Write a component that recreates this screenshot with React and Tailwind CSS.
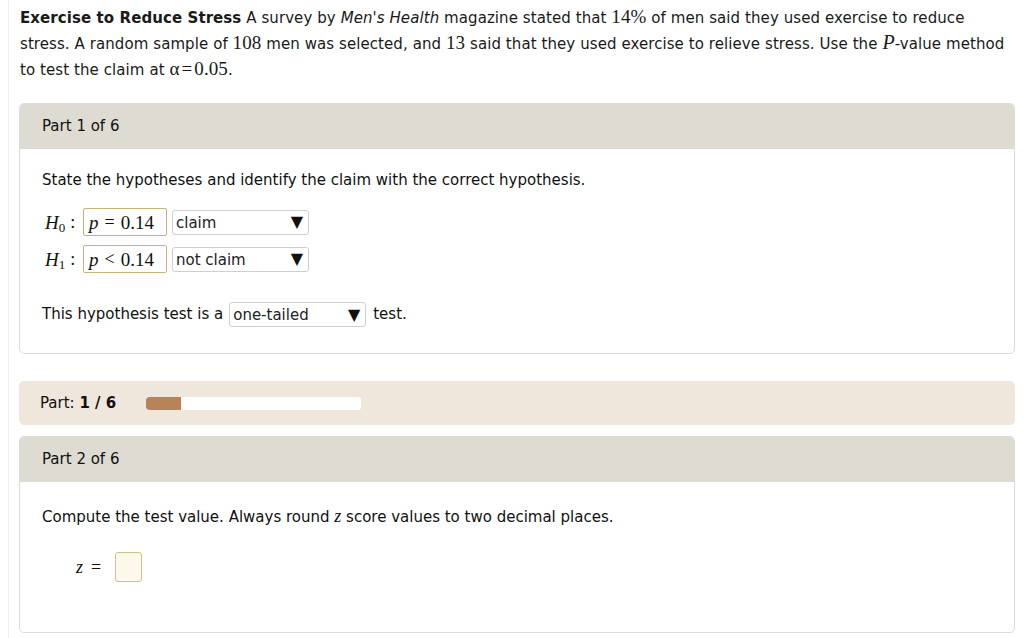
import React from "react";

const sans = { fontFamily: '"DejaVu Sans", Verdana, sans-serif' };
const serif = { fontFamily: '"Liberation Serif", "Times New Roman", serif' };

function M({ children, className = "" }) {
  return (
    <span className={"text-[18px] leading-none " + className} style={serif}>
      {children}
    </span>
  );
}

function Select({ value, w }) {
  return (
    <div
      className={`flex items-center justify-between h-[25px] border border-[#cfcfcf] rounded-[3px] bg-white pl-[3px] pr-[5px] ${w}`}
    >
      <span className="text-[15px] text-[#222] relative top-[1px]">{value}</span>
      <span className="text-[16px] text-[#111] leading-none">▼</span>
    </div>
  );
}

function HypRow({ sub, rel, tag }) {
  return (
    <div className="flex items-center h-[28px]">
      <span className="w-[41px] flex items-center text-[#111] pl-[3px]">
        <M className="italic text-[19px]">H</M>
        <span className="text-[13px] relative top-[5px] leading-none" style={serif}>{sub}</span>
        <M className="ml-[5px]">:</M>
      </span>
      <div className="h-[28px] w-[84px] border border-[#c8b27c] rounded-[2px] flex items-center pl-[5px] bg-white">
        <M className="italic text-[19px]">p</M>
        <M className="mx-[6px]">{rel}</M>
        <M className="text-[19px]">0.14</M>
      </div>
      <div className="ml-[5px]">
        <Select value={tag} w="w-[137px]" />
      </div>
    </div>
  );
}

export default function App() {
  return (
    <div className="w-[1024px] h-[638px] bg-white overflow-hidden text-[#111]" style={sans}>
      <div className="ml-[8px] h-full border-l border-[#efefef] pl-[10px] pr-[9px]">
        <div className="pl-[1px] pt-[5px] text-[15px] leading-[26px] text-[#1a1a1a] whitespace-nowrap tracking-[0.08px]">
          <b>Exercise to Reduce Stress</b> A survey by <i>Men's Health</i> magazine stated that{" "}
          <M className="text-[19px]">14%</M> of men said they used exercise to reduce
          <br />
          stress. A random sample of <M className="text-[19px]">108</M> men was selected, and{" "}
          <M className="text-[19px]">13</M> said that they used exercise to relieve stress. Use the{" "}
          <M className="italic text-[20px]">P</M>-value method
          <br />
          to test the claim at <M className="text-[19px]">α</M>
          <M className="mx-[2px] text-[19px]">=</M>
          <M className="text-[19px]">0.05</M>.
        </div>

        <div className="mt-[20px] border border-[#dcdcdc] rounded-[5px] h-[251px] overflow-hidden">
          <div className="h-[45px] bg-[#dedbd3] flex items-center pl-[22px] text-[15px]">Part 1 of 6</div>
          <div className="pl-[22px] pt-[21px] text-[15px]">
            <div className="leading-[20px]">State the hypotheses and identify the claim with the correct hypothesis.</div>
            <div className="mt-[18px] flex flex-col gap-[9px]">
              <HypRow sub="0" rel="=" tag="claim" />
              <HypRow sub="1" rel="<" tag="not claim" />
            </div>
            <div className="mt-[29px] flex items-center">
              <span>This hypothesis test is a</span>
              <div className="ml-[6px] mr-[7px]">
                <Select value="one-tailed" w="w-[137px]" />
              </div>
              <span>test.</span>
            </div>
          </div>
        </div>

        <div className="mt-[27px] h-[44px] bg-[#efe6dc] rounded-[5px] flex items-center pl-[21px] text-[15px]">
          <span className="w-[106px]">
            Part: <b>1 / 6</b>
          </span>
          <div className="w-[215px] h-[13px] bg-white rounded-[3px] overflow-hidden">
            <div className="h-full w-[35px] bg-[#b88356] rounded-l-[3px]"></div>
          </div>
        </div>

        <div className="mt-[11px] border border-[#dcdcdc] rounded-[5px] h-[197px] overflow-hidden">
          <div className="h-[45px] bg-[#dedbd3] flex items-center pl-[22px] text-[15px]">Part 2 of 6</div>
          <div className="pl-[22px] pt-[25px] text-[15px]">
            <div className="leading-[20px]">
              Compute the test value. Always round <M className="italic">z</M> score values to two decimal places.
            </div>
            <div className="mt-[25px] ml-[34px] flex items-center">
              <M className="italic">z</M>
              <M className="ml-[8px] mr-[14px]">=</M>
              <div className="w-[27px] h-[30px] border-[1.5px] border-[#cfc08e] rounded-[3px] bg-[#fcf9ec]"></div>
            </div>
          </div>
        </div>
      </div>
    </div>
  );
}
